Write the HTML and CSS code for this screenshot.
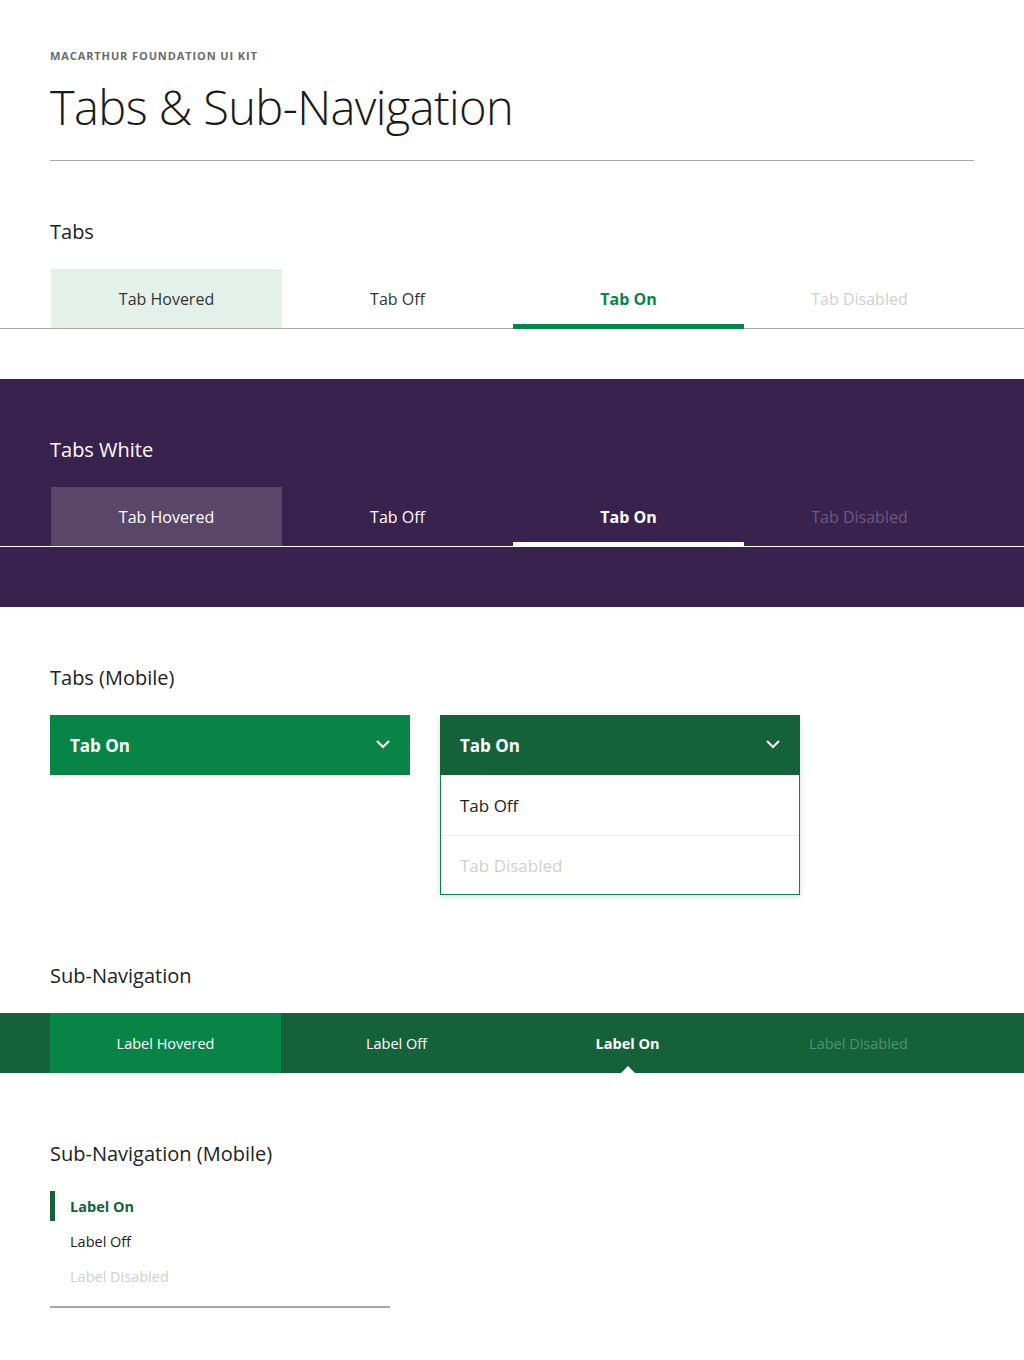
FILE: index.html
```html
<!DOCTYPE html>
<html lang="en">
<head>
<meta charset="utf-8">
<title>Tabs &amp; Sub-Navigation</title>
<link rel="stylesheet" href="styles.css">
</head>
<body>
<header class="page-head">
  <div class="eyebrow">MacArthur Foundation UI Kit</div>
  <h1 class="title">Tabs &amp; Sub-Navigation</h1>
</header>

<section class="section">
  <h2 class="heading">Tabs</h2>
  <div class="tabs">
    <div class="tab tab--hover">Tab Hovered</div>
    <div class="tab">Tab Off</div>
    <div class="tab tab--on">Tab On</div>
    <div class="tab tab--disabled">Tab Disabled</div>
  </div>
</section>

<section class="band-purple">
  <h2 class="heading heading--white">Tabs White</h2>
  <div class="tabs tabs--white">
    <div class="tab tab--hover">Tab Hovered</div>
    <div class="tab">Tab Off</div>
    <div class="tab tab--on">Tab On</div>
    <div class="tab tab--disabled">Tab Disabled</div>
  </div>
</section>

<section class="section section--mobile">
  <h2 class="heading">Tabs (Mobile)</h2>
  <div class="mobile-row">
    <div class="select">
      <div class="select-head">
        <span>Tab On</span>
        <svg class="chev" width="16" height="10" viewBox="0 0 16 10"><path d="M2 2l6 6 6-6" fill="none" stroke="#fff" stroke-width="2"/></svg>
      </div>
    </div>
    <div class="select select--open">
      <div class="select-head select-head--dark">
        <span>Tab On</span>
        <svg class="chev" width="16" height="10" viewBox="0 0 16 10"><path d="M2 2l6 6 6-6" fill="none" stroke="#fff" stroke-width="2"/></svg>
      </div>
      <div class="select-list">
        <div class="select-item">Tab Off</div>
        <div class="select-item select-item--disabled">Tab Disabled</div>
      </div>
    </div>
  </div>
</section>

<section class="section section--sub">
  <h2 class="heading">Sub-Navigation</h2>
  <div class="subnav">
    <div class="sub sub--hover">Label Hovered</div>
    <div class="sub">Label Off</div>
    <div class="sub sub--on">Label On</div>
    <div class="sub sub--disabled">Label Disabled</div>
  </div>
</section>

<section class="section section--submobile">
  <h2 class="heading">Sub-Navigation (Mobile)</h2>
  <ul class="sublist">
    <li class="sl sl--on">Label On</li>
    <li class="sl">Label Off</li>
    <li class="sl sl--disabled">Label Disabled</li>
  </ul>
</section>
</body>
</html>
```

FILE: styles.css
```css
* { box-sizing: border-box; }
html, body { margin: 0; padding: 0; background: #fff; }
body {
  font-family: "Open Sans", "Noto Sans", "Liberation Sans", sans-serif;
  color: #222;
  width: 1024px;
}

.page-head {
  padding: 48px 50px 0;
}
.page-head::after {
  content: "";
  display: block;
  height: 1px;
  background: #a8a8a8;
  margin-top: 23px;
}
.eyebrow {
  font-size: 11px;
  line-height: 16px;
  font-weight: 700;
  letter-spacing: 0.9px;
  text-transform: uppercase;
  color: #6a6a6a;
}
.title {
  margin: 13px 0 0;
  font-size: 47px;
  line-height: 60px;
  font-weight: 300;
  color: #1a1a1a;
  letter-spacing: -0.6px;
}

.heading {
  margin: 0 0 23px 50px;
  font-size: 20px;
  line-height: 28px;
  font-weight: 400;
  color: #222;
}
.heading--white { color: #fff; }

.section { padding-top: 57px; }

/* Tabs */
.tabs {
  display: flex;
  padding-left: 51px;
  border-bottom: 1px solid #aaa6a2;
}
.tab {
  width: 231px;
  height: 60px;
  margin-bottom: -1px;
  display: flex;
  align-items: center;
  justify-content: center;
  font-size: 16px;
  color: #333;
  padding-bottom: 1px;
}
.tab--hover { background: #e3f1ea; height: 59px; margin-bottom: 0; padding-bottom: 0; }
.tab--on {
  color: #07844a;
  font-weight: 700;
  box-shadow: inset 0 -5px 0 #07844a;
}
.tab--disabled { color: #cfcfcf; }

.band-purple {
  margin-top: 50px;
  background: #3a224f;
  padding-top: 57px;
  padding-bottom: 60px;
}
.tabs--white { border-bottom-color: #fff; }
.tabs--white .tab { color: #fff; }
.tabs--white .tab--hover { background: #5a4669; }
.tabs--white .tab--on { box-shadow: inset 0 -5px 0 #fff; }
.tabs--white .tab--disabled { color: #6c5a7e; }

/* Mobile tabs */
.mobile-row {
  display: flex;
  gap: 30px;
  padding-left: 50px;
}
.select { width: 360px; }
.select-head {
  height: 60px;
  background: #078446;
  color: #fff;
  font-size: 17px;
  font-weight: 700;
  display: flex;
  align-items: center;
  justify-content: space-between;
  padding: 0 20px;
}
.select-head--dark { background: #14613a; }
.chev { display: block; margin-top: -2px; margin-right: -1px; }
.select--open { box-shadow: 0 2px 6px rgba(0,0,0,0.14); }
.select-list {
  border: 1px solid #078446;
  border-top: 0;
}
.select-item {
  height: 60px;
  display: flex;
  align-items: center;
  padding-left: 19px;
  font-size: 17px;
  color: #222;
}
.select-item + .select-item { border-top: 1px solid #ececec; height: 59px; }
.select-item--disabled { color: #cfcfcf; }

/* Sub navigation */
.section--sub { padding-top: 67px; }
.subnav {
  display: flex;
  padding-left: 50px;
  background: #14613a;
}
.sub {
  position: relative;
  width: 231px;
  height: 60px;
  display: flex;
  align-items: center;
  justify-content: center;
  font-size: 14.5px;
  color: #fff;
}
.sub--hover { background: #078446; }
.sub--on { font-weight: 700; }
.sub--on::after {
  content: "";
  position: absolute;
  bottom: 0;
  left: 50%;
  margin-left: -7px;
  border-left: 7px solid transparent;
  border-right: 7px solid transparent;
  border-bottom: 7px solid #fff;
}
.sub--disabled { color: #52936e; }

/* Sub navigation mobile */
.section--submobile { padding-top: 67px; }
.sublist {
  list-style: none;
  margin: 0 0 0 50px;
  padding: 0 0 15px;
  width: 340px;
  border-bottom: 2px solid #aaa6a2;
}
.sl {
  height: 30px;
  margin-bottom: 5px;
  display: flex;
  align-items: center;
  padding-left: 20px;
  font-size: 14.5px;
  color: #222;
}
.sl:last-child { margin-bottom: 0; }
.sl--on {
  color: #14613a;
  font-weight: 700;
  box-shadow: inset 5px 0 0 #14613a;
}
.sl--disabled { color: #cfcfcf; }
```
